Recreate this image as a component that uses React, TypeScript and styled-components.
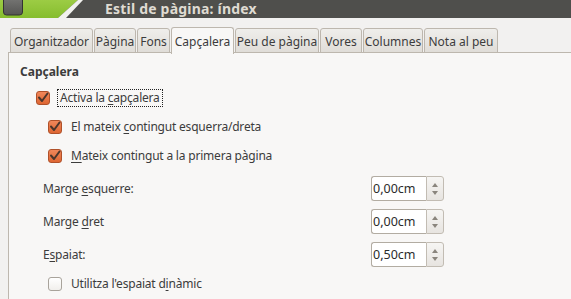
import React from "react";
import styled, { createGlobalStyle } from "styled-components";

const Global = createGlobalStyle`
  html, body { margin: 0; padding: 0; background: #f2f1f0; }
  body { font-family: "Noto Sans", "DejaVu Sans", sans-serif; font-size: 12px; color: #3c3c3c; }
  u { text-decoration-thickness: 1px; text-underline-offset: 2px; }
`;

const Window = styled.div`
  width: 571px;
  height: 299px;
  overflow: hidden;
  background: #f2f1f0;
  display: flex;
  flex-direction: column;
`;

const TitleBar = styled.div`
  height: 18px;
  flex: none;
  background: #4f4f4c;
  display: flex;
  align-items: center;
  position: relative;
`;

const TitleDeco = styled.svg`
  position: absolute;
  left: 0;
  top: 0;
`;

const TitleText = styled.div`
  margin-left: 105px;
  font-weight: bold;
  font-size: 14px;
  color: #dfdbd2;
  position: relative;
  top: -1px;
  letter-spacing: 0.2px;
`;

const TabStrip = styled.div`
  display: flex;
  align-items: flex-end;
  padding: 8px 0 0 10px;
  height: 35px;
  box-sizing: border-box;
  position: relative;
`;

const Tab = styled.div<{ $active?: boolean; $w: number }>`
  width: ${(p) => p.$w}px;
  box-sizing: border-box;
  height: ${(p) => (p.$active ? 27 : 25)}px;
  margin-right: 1px;
  border: 1px solid #bdb7ae;
  border-bottom: ${(p) => (p.$active ? "none" : "1px solid #bdb7ae")};
  border-radius: 3px 3px 0 0;
  background: ${(p) =>
    p.$active ? "#f8f7f6" : "linear-gradient(#efeeeb, #e0ddd8)"};
  display: flex;
  align-items: center;
  justify-content: center;
  color: #3c3c3c;
  font-size: 12px;
  padding-top: ${(p) => (p.$active ? 0 : 1)}px;
  position: relative;
  z-index: ${(p) => (p.$active ? 2 : 1)};
  margin-bottom: ${(p) => (p.$active ? -1 : 0)}px;
`;

const Panel = styled.div`
  flex: 1;
  margin-left: 8px;
  border-top: 1px solid #bdb7ae;
  border-left: 1px solid #bdb7ae;
  background: #f8f7f6;
  display: flex;
  flex-direction: column;
  margin-top: -1px;
  letter-spacing: -0.2px;
`;

const SectionTitle = styled.div`
  font-weight: bold;
  height: 18px;
  line-height: 18px;
  margin: 10px 0 0 11px;
  letter-spacing: 0;
`;

const CheckRow = styled.div<{ $indent: number; $h?: number; $top?: number }>`
  height: ${(p) => p.$h ?? 29}px;
  margin-top: ${(p) => p.$top ?? 0}px;
  display: flex;
  align-items: center;
  padding-left: ${(p) => p.$indent}px;
`;

const Box = styled.span<{ $checked?: boolean }>`
  width: 14px;
  height: 14px;
  box-sizing: border-box;
  border-radius: 3px;
  flex: none;
  display: inline-flex;
  align-items: center;
  justify-content: center;
  border: 1px solid ${(p) => (p.$checked ? "#b0512a" : "#a8a39b")};
  background: ${(p) =>
    p.$checked ? "linear-gradient(#f0875a, #de6632)" : "linear-gradient(#ffffff, #f1efec)"};
`;

const CheckLabel = styled.span<{ $gap: number; $focus?: boolean }>`
  margin-left: ${(p) => p.$gap}px;
  padding: 1px 2px;
  line-height: 14px;
  outline: ${(p) => (p.$focus ? "1px dotted #222" : "none")};
`;

const FieldGrid = styled.div`
  display: grid;
  grid-template-columns: 328px auto;
  row-gap: 8px;
  padding-left: 34px;
  margin-top: 6px;
  align-items: center;
`;

const FieldLabel = styled.span``;

const Spin = styled.div`
  display: flex;
  height: 25px;
`;

const SpinInput = styled.div`
  width: 55px;
  box-sizing: border-box;
  border: 1px solid #b2aca2;
  border-right: none;
  border-radius: 3px 0 0 3px;
  background: #fff;
  display: flex;
  align-items: center;
  padding-left: 1px;
  color: #2b2b2b;
  font-size: 12.5px;
  letter-spacing: 0;
`;

const SpinButton = styled.div`
  width: 18px;
  box-sizing: border-box;
  border: 1px solid #c2bcb3;
  border-radius: 0 3px 3px 0;
  background: linear-gradient(#f6f5f3, #e7e4e0);
  display: flex;
  flex-direction: column;
  align-items: center;
  justify-content: center;
  gap: 4px;
`;

const Check = () => (
  <svg width="12" height="12" viewBox="0 0 12 12">
    <path d="M2 5.5 L5 9 L10.5 1.5" fill="none" stroke="#4a362c" strokeWidth="2" strokeLinecap="round" strokeLinejoin="round" />
  </svg>
);

const Arrows = () => (
  <>
    <svg width="6" height="4" viewBox="0 0 6 4"><path d="M0 4 L3 0 L6 4 Z" fill="#8a857d" /></svg>
    <svg width="6" height="4" viewBox="0 0 6 4"><path d="M0 0 L3 4 L6 0 Z" fill="#8a857d" /></svg>
  </>
);

const tabs: [string, number][] = [
  ["Organitzador", 83],
  ["Pàgina", 42],
  ["Fons", 33],
  ["Capçalera", 63],
  ["Peu de pàgina", 84],
  ["Vores", 42],
  ["Columnes", 60],
  ["Nota al peu", 74],
];

const fields: [React.ReactNode, string][] = [
  [<>Marge <u>e</u>squerre:</>, "0,00cm"],
  [<>Marge <u>d</u>ret</>, "0,00cm"],
  [<>E<u>s</u>paiat:</>, "0,50cm"],
];

export default function App() {
  return (
    <Window>
      <Global />
      <TitleBar>
        <TitleDeco width="100" height="18" viewBox="0 0 100 18">
          <defs>
            <linearGradient id="g" x1="0" y1="0" x2="0" y2="1">
              <stop offset="0" stopColor="#9ccc44" />
              <stop offset="1" stopColor="#86bd2e" />
            </linearGradient>
            <linearGradient id="b" x1="0" y1="0" x2="0" y2="1">
              <stop offset="0" stopColor="#7a7a78" />
              <stop offset="1" stopColor="#555553" />
            </linearGradient>
          </defs>
          <path d="M0 0 H78 L58 18 H0 Z" fill="url(#g)" />
          <path d="M58 18 L78 0 H83 L66 18 Z" fill="#f2f2ee" />
          <rect x="3.5" y="-4" width="19" height="19" rx="3" fill="url(#b)" stroke="#333" />
        </TitleDeco>
        <TitleText>Estil de pàgina: índex</TitleText>
      </TitleBar>
      <TabStrip>
        {tabs.map(([t, w]) => (
          <Tab key={t} $w={w} $active={t === "Capçalera"}>{t}</Tab>
        ))}
      </TabStrip>
      <Panel>
        <SectionTitle>Capçalera</SectionTitle>
        <CheckRow $indent={27} $top={2}>
          <Box $checked><Check /></Box>
          <CheckLabel $gap={8} $focus>Activa la <u>c</u>apçalera</CheckLabel>
        </CheckRow>
        <CheckRow $indent={39}>
          <Box $checked><Check /></Box>
          <CheckLabel $gap={7}>El mateix <u>c</u>ontingut esquerra/dreta</CheckLabel>
        </CheckRow>
        <CheckRow $indent={39}>
          <Box $checked><Check /></Box>
          <CheckLabel $gap={7}><u>M</u>ateix contingut a la primera pàgina</CheckLabel>
        </CheckRow>
        <FieldGrid>
          {fields.map(([label, value], i) => (
            <React.Fragment key={i}>
              <FieldLabel>{label}</FieldLabel>
              <Spin>
                <SpinInput>{value}</SpinInput>
                <SpinButton><Arrows /></SpinButton>
              </Spin>
            </React.Fragment>
          ))}
        </FieldGrid>
        <CheckRow $indent={39} $h={18} $top={8}>
          <Box />
          <CheckLabel $gap={7}>Utilitza l'espaiat d<u>i</u>nàmic</CheckLabel>
        </CheckRow>
      </Panel>
    </Window>
  );
}
